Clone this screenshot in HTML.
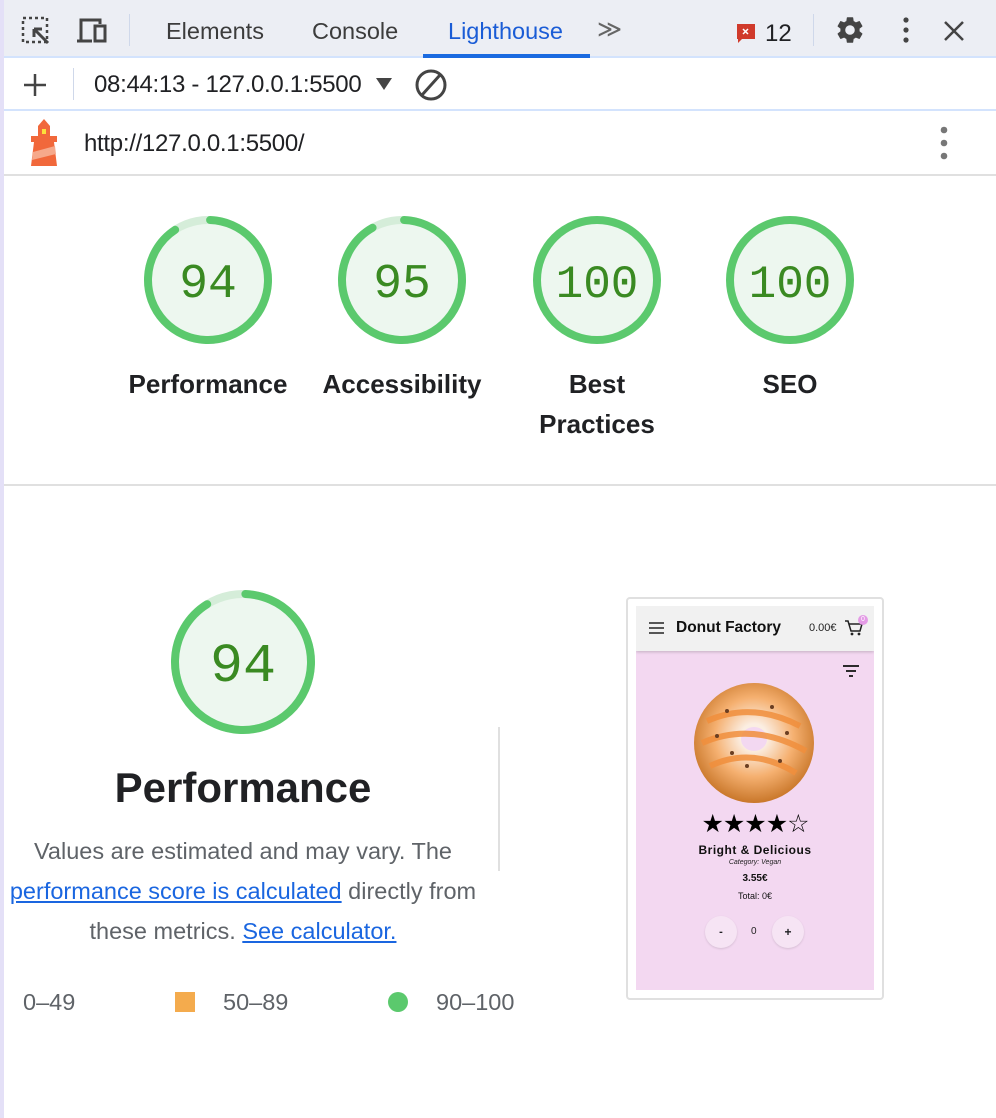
<!DOCTYPE html>
<html><head><meta charset="utf-8"><style>
*{margin:0;padding:0;box-sizing:border-box}
body{width:996px;height:1118px;background:#fff;font-family:"Liberation Sans",Arial,sans-serif;position:relative;overflow:hidden;color:#202124}
.abs{position:absolute}
.strip{left:0;top:0;width:4px;height:1118px;background:#e4e0f7}
.tabs{left:4px;top:0;width:992px;height:58px;background:#eceef4;border-bottom:2px solid #d3e3fd}
.tab{top:18px;font-size:23.5px;color:#3c3c3c}
.lbl{font-size:26px;font-weight:bold;color:#202124;text-align:center;line-height:40px}
.gnum{font-family:"Liberation Mono",monospace;fill:#3a8a22}
</style></head><body>
<div class="abs strip"></div>
<div class="abs tabs"></div>
<svg class="abs" style="left:20px;top:15px" width="34" height="32" viewBox="0 0 34 32"><rect x="3" y="3" width="24" height="24" fill="none" stroke="#444" stroke-width="2.5" stroke-dasharray="3 3"/><path d="M14 14 L28 28 M14 14 h8 M14 14 v8" stroke="#444" stroke-width="3" fill="none"/></svg>
<svg class="abs" style="left:76px;top:16px" width="34" height="30" viewBox="0 0 34 30"><path d="M5 24 V4 H24 V8" stroke="#444" stroke-width="3" fill="none"/><path d="M1 25 H16" stroke="#444" stroke-width="3"/><rect x="19" y="10" width="10" height="15" fill="none" stroke="#444" stroke-width="3"/></svg>
<div class="abs" style="left:129px;top:14px;width:1px;height:32px;background:#cfd8ea"></div>
<div class="abs tab" style="left:166px">Elements</div>
<div class="abs tab" style="left:312px">Console</div>
<div class="abs tab" style="left:448px;color:#1a5cd6">Lighthouse</div>
<div class="abs" style="left:423px;top:54px;width:167px;height:4px;background:#1a6ae0"></div>
<div class="abs" style="left:597px;top:15px;font-size:24px;color:#666">&#8811;</div>
<svg class="abs" style="left:736px;top:23px" width="20" height="22" viewBox="0 0 20 22"><path d="M1 1 H19 V16 H6 L2 20 V16 H1 Z" fill="#d03a2b"/><path d="M7 6 L12 11 M12 6 L7 11" stroke="#fff" stroke-width="1.5"/></svg>
<div class="abs" style="left:765px;top:20px;font-size:24px;color:#202124">12</div>
<div class="abs" style="left:813px;top:14px;width:1px;height:32px;background:#cfd8ea"></div>
<svg class="abs" style="left:834px;top:14px" width="32" height="32" viewBox="0 0 24 24"><path fill="#444" d="M19.14 12.94c.04-.3.06-.61.06-.94 0-.32-.02-.64-.07-.94l2.03-1.58a.49.49 0 0 0 .12-.61l-1.92-3.32a.49.49 0 0 0-.59-.22l-2.39.96c-.5-.38-1.030-.7-1.62-.94l-.36-2.54a.48.48 0 0 0-.48-.41h-3.84a.48.48 0 0 0-.47.41l-.36 2.54c-.59.24-1.13.57-1.62.94l-2.39-.96a.48.48 0 0 0-.59.22L2.74 8.87a.47.47 0 0 0 .12.61l2.03 1.58c-.05.3-.09.63-.09.94s.02.64.07.94l-2.03 1.58a.49.49 0 0 0-.12.61l1.92 3.32c.12.22.37.29.59.22l2.39-.96c.5.38 1.03.7 1.62.94l.36 2.54c.05.24.24.41.48.41h3.84c.24 0 .44-.17.47-.41l.36-2.54c.59-.24 1.13-.56 1.62-.94l2.39.96c.22.08.47 0 .59-.22l1.92-3.32a.47.47 0 0 0-.12-.61l-2.01-1.58zM12 15.6A3.6 3.6 0 1 1 12 8.4a3.6 3.6 0 0 1 0 7.2z"/></svg>
<svg class="abs" style="left:900px;top:16px" width="12" height="28"><circle cx="6" cy="4" r="2.6" fill="#444"/><circle cx="6" cy="14" r="2.6" fill="#444"/><circle cx="6" cy="24" r="2.6" fill="#444"/></svg>
<svg class="abs" style="left:943px;top:20px" width="22" height="22"><path d="M2 2 L20 20 M20 2 L2 20" stroke="#444" stroke-width="2.5"/></svg>
<svg class="abs" style="left:22px;top:72px" width="26" height="26"><path d="M13 2 V24 M2 13 H24" stroke="#444" stroke-width="2.5"/></svg>
<div class="abs" style="left:73px;top:68px;width:1px;height:32px;background:#cfd8ea"></div>
<div class="abs" style="left:94px;top:71px;font-size:24px;color:#202124;letter-spacing:-.3px">08:44:13 - 127.0.0.1:5500</div>
<svg class="abs" style="left:376px;top:78px" width="16" height="12"><path d="M0 0 H16 L8 12Z" fill="#444"/></svg>
<svg class="abs" style="left:414px;top:68px" width="34" height="34"><circle cx="17" cy="17" r="14" fill="none" stroke="#444" stroke-width="3"/><path d="M26 7 L8 27" stroke="#444" stroke-width="3"/></svg>
<div class="abs" style="left:4px;top:109px;width:992px;height:2px;background:#d3e3fd"></div>
<svg class="abs" style="left:26px;top:118px" width="36" height="50" viewBox="0 0 36 50"><path d="M12 8 L18 1 L24 8 Z" fill="#f1683b"/><rect x="12" y="8" width="12" height="10" fill="#f1683b"/><rect x="16" y="11" width="4" height="5" fill="#fbe13b"/><rect x="5" y="18" width="26" height="6" fill="#f1683b"/><path d="M8 24 H28 L31 48 H5 Z" fill="#f1683b"/><path d="M7 34 L29 28 L30 36 L6 42Z" fill="#f6a98b"/></svg>
<div class="abs" style="left:84px;top:130px;font-size:24px;color:#202124;letter-spacing:-.3px">http://127.0.0.1:5500/</div>
<svg class="abs" style="left:938px;top:126px" width="12" height="36"><circle cx="6" cy="4" r="3.3" fill="#777"/><circle cx="6" cy="17" r="3.3" fill="#777"/><circle cx="6" cy="30" r="3.3" fill="#777"/></svg>
<div class="abs" style="left:4px;top:174px;width:992px;height:2px;background:#e0e0e0"></div>
<svg class="abs" style="left:0;top:0" width="996" height="1118">
<g transform="translate(208,280)"><circle r="60" fill="#edf7ef" stroke="#d5edd9" stroke-width="8"/><circle r="60" fill="none" stroke="#5bc96d" stroke-width="8" stroke-linecap="round" stroke-dasharray="340 400" transform="rotate(-88)"/><text class="gnum" y="17" text-anchor="middle" font-size="48">94</text></g>
<g transform="translate(402,280)"><circle r="60" fill="#edf7ef" stroke="#d5edd9" stroke-width="8"/><circle r="60" fill="none" stroke="#5bc96d" stroke-width="8" stroke-linecap="round" stroke-dasharray="344 400" transform="rotate(-88)"/><text class="gnum" y="17" text-anchor="middle" font-size="48">95</text></g>
<g transform="translate(597,280)"><circle r="60" fill="#edf7ef" stroke="#5bc96d" stroke-width="8"/><text class="gnum" y="17" text-anchor="middle" font-size="46">100</text></g>
<g transform="translate(790,280)"><circle r="60" fill="#edf7ef" stroke="#5bc96d" stroke-width="8"/><text class="gnum" y="17" text-anchor="middle" font-size="46">100</text></g>
<g transform="translate(243,662)"><circle r="68" fill="#edf7ef" stroke="#d5edd9" stroke-width="8"/><circle r="68" fill="none" stroke="#5bc96d" stroke-width="8" stroke-linecap="round" stroke-dasharray="387 450" transform="rotate(-88)"/><text class="gnum" y="19" text-anchor="middle" font-size="55">94</text></g>
</svg>
<div class="abs lbl" style="left:98px;top:364px;width:220px">Performance</div>
<div class="abs lbl" style="left:292px;top:364px;width:220px">Accessibility</div>
<div class="abs lbl" style="left:487px;top:364px;width:220px">Best<br>Practices</div>
<div class="abs lbl" style="left:680px;top:364px;width:220px">SEO</div>
<div class="abs" style="left:4px;top:484px;width:992px;height:2px;background:#e0e0e0"></div>
<div class="abs" style="left:0;top:764px;width:486px;text-align:center;font-size:42px;font-weight:bold;color:#202124">Performance</div>
<div class="abs" style="left:-20px;top:831px;width:526px;text-align:center;font-size:23.5px;line-height:40px;color:#5f6368">Values are estimated and may vary. The<br><span style="color:#1a66e0;text-decoration:underline">performance score is calculated</span> directly from<br>these metrics. <span style="color:#1a66e0;text-decoration:underline">See calculator.</span></div>
<div class="abs" style="left:498px;top:727px;width:2px;height:144px;background:#e0e0e0"></div>
<div class="abs" style="left:23px;top:989px;font-size:23.5px;color:#5f6368">0–49</div>
<div class="abs" style="left:175px;top:992px;width:20px;height:20px;background:#f4ab4d"></div>
<div class="abs" style="left:223px;top:989px;font-size:23.5px;color:#5f6368">50–89</div>
<div class="abs" style="left:388px;top:992px;width:20px;height:20px;border-radius:50%;background:#5bc96d"></div>
<div class="abs" style="left:436px;top:989px;font-size:23.5px;color:#5f6368">90–100</div>
<div class="abs" style="left:626px;top:597px;width:258px;height:403px;border:2px solid #e0e0e0;border-radius:4px;background:#fff"></div>
<div class="abs" style="left:636px;top:606px;width:238px;height:384px;background:#f3d8f1;overflow:hidden">
 <div class="abs" style="left:0;top:0;width:238px;height:45px;background:#f1f1f1;box-shadow:0 1px 3px rgba(0,0,0,.2)"></div>
 <svg class="abs" style="left:13px;top:16px" width="15" height="12"><path d="M0 1H15M0 6H15M0 11H15" stroke="#222" stroke-width="1.6"/></svg>
 <div class="abs" style="left:40px;top:13px;font-size:15.5px;font-weight:bold;color:#111">Donut Factory</div>
 <div class="abs" style="left:173px;top:16px;font-size:11px;color:#222">0.00€</div>
 <svg class="abs" style="left:208px;top:12px" width="20" height="20"><path d="M1 3H4L7 13H16L18 6H5" stroke="#222" stroke-width="1.5" fill="none"/><circle cx="8" cy="16" r="1.4" fill="#222"/><circle cx="15" cy="16" r="1.4" fill="#222"/></svg>
 <div class="abs" style="left:222px;top:9px;width:10px;height:10px;border-radius:50%;background:#e49be6;font-size:7px;color:#fff;text-align:center;line-height:10px">0</div>
 <svg class="abs" style="left:206px;top:58px" width="18" height="14"><path d="M1 2H17M4 7H14M7 12H11" stroke="#111" stroke-width="1.8"/></svg>
 <svg class="abs" style="left:56px;top:75px" width="124" height="124" viewBox="0 0 124 124"><defs><radialGradient id="dg" cx="50%" cy="45%" r="55%"><stop offset="0.2" stop-color="#fbeee2"/><stop offset="0.6" stop-color="#f5b070"/><stop offset="1" stop-color="#c9772a"/></radialGradient></defs><ellipse cx="62" cy="62" rx="60" ry="60" fill="url(#dg)"/><ellipse cx="62" cy="58" rx="13" ry="12" fill="#f3d8f1"/><path d="M15 40 Q60 20 108 45 M10 62 Q60 40 114 70 M18 85 Q60 65 104 92" stroke="#f08e3c" stroke-width="6" fill="none" opacity=".85"/><g fill="#6a3e22"><circle cx="35" cy="30" r="2"/><circle cx="80" cy="26" r="2"/><circle cx="25" cy="55" r="2"/><circle cx="95" cy="52" r="2"/><circle cx="55" cy="85" r="2"/><circle cx="88" cy="80" r="2"/><circle cx="40" cy="72" r="2"/></g></svg>
 <div class="abs" style="left:0;top:203px;width:238px;text-align:center;font-size:25px;color:#000;letter-spacing:-1px">★★★★☆</div>
 <div class="abs" style="left:0;top:237px;width:238px;text-align:center;font-size:12px;font-weight:bold;color:#111;letter-spacing:.5px">Bright &amp; Delicious</div>
 <div class="abs" style="left:0;top:253px;width:238px;text-align:center;font-size:7px;font-style:italic;color:#222">Category: Vegan</div>
 <div class="abs" style="left:0;top:267px;width:238px;text-align:center;font-size:10px;font-weight:bold;color:#111">3.55€</div>
 <div class="abs" style="left:0;top:285px;width:238px;text-align:center;font-size:9px;color:#111">Total: 0€</div>
 <div class="abs" style="left:69px;top:310px;width:32px;height:32px;border-radius:50%;background:#f6e4f4;box-shadow:0 1px 2px rgba(0,0,0,.12);text-align:center;line-height:32px;font-size:11px;font-weight:bold">-</div>
 <div class="abs" style="left:115px;top:320px;font-size:10px;color:#222">0</div>
 <div class="abs" style="left:136px;top:310px;width:32px;height:32px;border-radius:50%;background:#f6e4f4;box-shadow:0 1px 2px rgba(0,0,0,.12);text-align:center;line-height:32px;font-size:12px;font-weight:bold">+</div>
</div>
</body></html>
